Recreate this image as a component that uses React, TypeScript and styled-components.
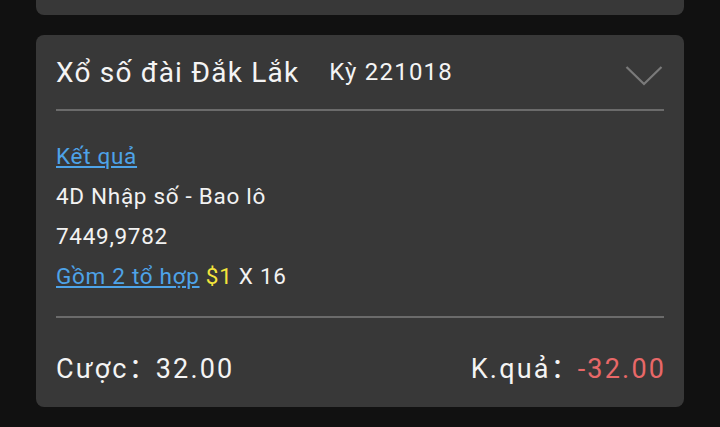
import React from "react";
import styled, { createGlobalStyle } from "styled-components";

const Global = createGlobalStyle`
  html, body { margin: 0; padding: 0; background: #111111; }
  body { font-family: Roboto, "Noto Sans", sans-serif; color: #f2f2f2; }
`;

const Page = styled.div`
  display: flex;
  flex-direction: column;
  gap: 20px;
  padding: 0 36px;
  overflow: hidden;
  height: 427px;
  box-sizing: border-box;
`;

const Card = styled.div<{ $clipped?: boolean }>`
  background: #383838;
  border-radius: 8px;
  padding: 0 20px;
  display: flex;
  flex-direction: column;
  flex-shrink: 0;
  ${(p) => (p.$clipped ? "height: 115px; margin-top: -100px;" : "")}
`;

const Header = styled.div`
  display: flex;
  align-items: center;
  height: 74px;
  border-bottom: 2px solid #6b6b6b;
`;

const Title = styled.span`
  font-size: 28px;
  letter-spacing: 1.2px;
  color: #f4f4f4;
`;

const Period = styled.span`
  font-size: 24px;
  letter-spacing: 1.2px;
  margin-left: 30px;
  color: #f4f4f4;
  flex: 1;
`;

const ChevronWrap = styled.span`
  display: flex;
  margin: 8px 1px 0 0;
`;

const Chevron = () => (
  <ChevronWrap>
    <svg width="38" height="22" viewBox="0 0 38 22">
      <polyline points="1.5,2 19,19 36.5,2" fill="none" stroke="#7a7a7a" strokeWidth="2.2" />
    </svg>
  </ChevronWrap>
);

const Body = styled.div`
  display: flex;
  flex-direction: column;
  padding: 25px 0 20px;
  border-bottom: 2px solid #6b6b6b;
`;

const Line = styled.div`
  font-size: 22.5px;
  letter-spacing: 0.7px;
  line-height: 40px;
  height: 40px;
  color: #f2f2f2;
  white-space: nowrap;
`;

const Link = styled.a`
  color: #4ea3e8;
  text-decoration: underline;
  text-underline-offset: 2px;
  text-decoration-thickness: 1.5px;
`;

const Money = styled.span`
  color: #f3e53c;
`;

const Footer = styled.div`
  display: flex;
  align-items: center;
  justify-content: space-between;
  height: 89px;
  padding-top: 7px;
  box-sizing: border-box;
  font-size: 27px;
  letter-spacing: 2.2px;
  color: #f4f4f4;
`;

const Colon = styled.span`
  font-family: "Noto Sans CJK SC", sans-serif;
  letter-spacing: 0;
`;

const Loss = styled.span`
  color: #e86868;
  margin-right: -2.2px;
`;

export default function App() {
  return (
    <>
      <Global />
      <Page>
        <Card $clipped />
        <Card>
          <Header>
            <Title>Xổ số đài Đắk Lắk</Title>
            <Period>Kỳ 221018</Period>
            <Chevron />
          </Header>
          <Body>
            <Line>
              <Link>Kết quả</Link>
            </Line>
            <Line>4D Nhập số - Bao lô</Line>
            <Line>7449,9782</Line>
            <Line>
              <Link>Gồm 2 tổ hợp</Link> <Money>$1</Money> X 16
            </Line>
          </Body>
          <Footer>
            <span>
              Cược<Colon>：</Colon>32.00
            </span>
            <span>
              K.quả<Colon>：</Colon>
              <Loss>-32.00</Loss>
            </span>
          </Footer>
        </Card>
      </Page>
    </>
  );
}
